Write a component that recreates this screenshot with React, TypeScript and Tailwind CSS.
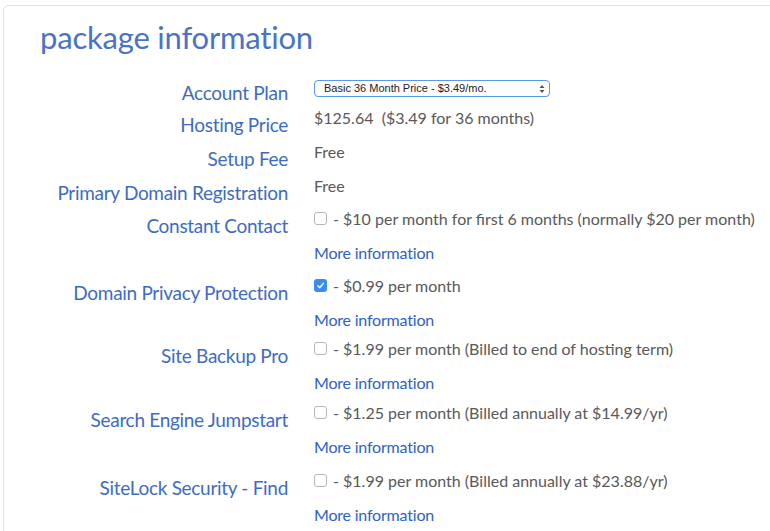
import React from "react";

type Row = {
  label: string;
  value?: React.ReactNode;
  check?: boolean;
  checked?: boolean;
  more?: boolean;
  shift?: string;
};

const rows: Row[] = [
  { label: "Hosting Price", value: "$125.64\u00a0\u00a0($3.49 for 36 months)" },
  { label: "Setup Fee", value: "Free" },
  { label: "Primary Domain Registration", value: "Free", shift: "-mb-[1px]" },
  {
    label: "Constant Contact",
    check: true,
    value: "- $10 per month for first 6 months (normally $20 per month)",
    more: true,
  },
  { label: "Domain Privacy Protection", check: true, checked: true, value: "- $0.99 per month", more: true },
  {
    label: "Site Backup Pro",
    check: true,
    value: "- $1.99 per month (Billed to end of hosting term)",
    more: true,
    shift: "-mt-[4px]",
  },
  {
    label: "Search Engine Jumpstart",
    check: true,
    value: "- $1.25 per month (Billed annually at $14.99/yr)",
    more: true,
    shift: "-mt-[3px]",
  },
  {
    label: "SiteLock Security - Find",
    check: true,
    value: "- $1.99 per month (Billed annually at $23.88/yr)",
    more: true,
    shift: "mt-[1px]",
  },
];

function Checkbox({ checked }: { checked?: boolean }) {
  if (checked) {
    return (
      <span className="mr-[6px] inline-flex h-[13px] w-[13px] items-center justify-center rounded-[3px] bg-[#3b8cf0]">
        <svg width="9" height="9" viewBox="0 0 10 10" fill="none">
          <path d="M2 5.3 L4.2 7.4 L8.2 2.6" stroke="white" strokeWidth="1.6" strokeLinecap="round" strokeLinejoin="round" />
        </svg>
      </span>
    );
  }
  return <span className="mr-[6px] inline-block h-[13px] w-[13px] rounded-[3px] border border-[#b5b5b5] bg-white" />;
}

export default function App() {
  return (
    <div className="h-[531px] w-[770px] overflow-hidden bg-white font-['Lato',sans-serif]">
      <div className="ml-[3px] mt-[5px] h-[600px] w-[820px] rounded-tl-[6px] border border-[#d4e3f5] bg-white">
        <h1 className="ml-[36px] mt-[9px] text-[31px] leading-[44px] tracking-[-0.2px] text-[#4a72c6]">
          package information
        </h1>

        <div className="mt-[14px] flex h-[28px]">
          <div className="w-[284px] pt-[10px] text-right text-[19px] leading-[20px] tracking-[-0.3px] text-[#3d6cbf]">
            Account Plan
          </div>
          <div className="ml-[26px] pt-[7px]">
            <div className="flex h-[17px] w-[236px] items-center justify-between rounded-[4px] border border-[#5a98e8] bg-white pl-[9px] pr-[4px] font-['Liberation_Sans',sans-serif] text-[11px] text-[#222]">
              <span>Basic 36 Month Price - $3.49/mo.</span>
              <svg width="6" height="10" viewBox="0 0 6 10">
                <path d="M3 1 L5.5 4 H0.5 Z M3 9 L5.5 6 H0.5 Z" fill="#555" />
              </svg>
            </div>
          </div>
        </div>

        {rows.map((r) => (
          <div key={r.label} className={`flex ${r.shift ?? ""}`}>
            <div className="w-[284px] pt-[14px] text-right text-[19px] leading-[20px] tracking-[-0.3px] text-[#3d6cbf]">
              {r.label}
            </div>
            <div className="ml-[26px] text-[16px] leading-[33.5px] text-[#595959]">
              <div className="flex items-center">
                {r.check && <Checkbox checked={r.checked} />}
                <span>{r.value}</span>
              </div>
              {r.more && <div className="tracking-[-0.2px] text-[#2f62c2]">More information</div>}
            </div>
          </div>
        ))}
      </div>
    </div>
  );
}
